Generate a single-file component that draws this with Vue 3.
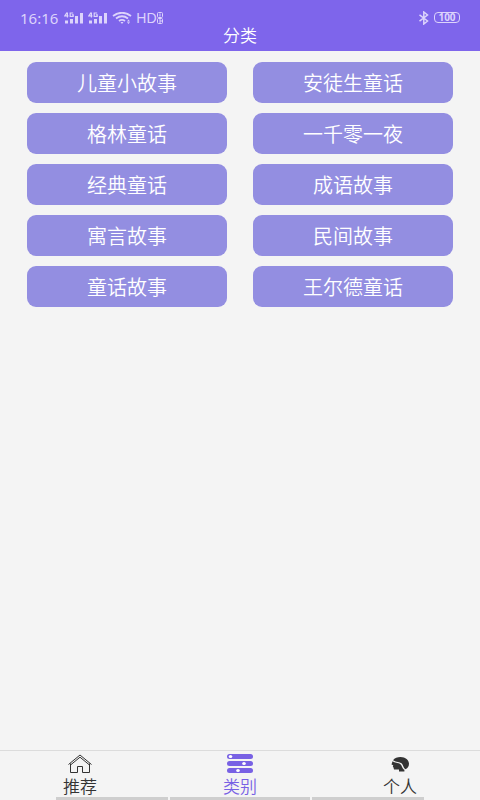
<script setup>
import { ref } from 'vue'

const categories = [
  '儿童小故事', '安徒生童话',
  '格林童话', '一千零一夜',
  '经典童话', '成语故事',
  '寓言故事', '民间故事',
  '童话故事', '王尔德童话',
]

const tabs = [
  { id: 'home', label: '推荐' },
  { id: 'category', label: '类别' },
  { id: 'profile', label: '个人' },
]
const active = ref('category')
</script>

<template>
  <div class="page">
    <header class="header">
      <div class="status">
        <div class="status-group">
          <span class="time">16:16</span>
          <svg v-for="n in 2" :key="n" class="signal" viewBox="0 0 20 12" width="20" height="12" aria-hidden="true">
            <path d="M3 0.5 L0.8 3.8 H4.400 M3.400 0.5 V5.500 M9.200 1 H6.200 V4.500 H9.200 V2.800 H7.800" fill="none" stroke="currentColor" stroke-width="1.200" />
            <path d="M1 8.500h3v3h-3z M6 7h3v4.500h-3z M11 4h3v7.500h-3z M16 1h3v10.500h-3z" fill="currentColor" />
          </svg>
          <svg class="wifi" viewBox="0 0 20 12" width="20" height="12" aria-hidden="true">
            <path d="M1 4 Q10 -2.500 19 4 M4 6.500 Q10 2 16 6.500 M7 9 Q10 6.800 13 9" fill="none" stroke="currentColor" stroke-width="1.800" />
            <path d="M8.500 10h3l-1.500 2z M15 9.500l1.500-2 1.500 2z M15 10.300h3l-1.500 1.700z" fill="currentColor" />
          </svg>
          <span class="hd">HD</span>
          <svg class="sims" viewBox="0 0 6 12" width="6" height="12" aria-hidden="true">
            <rect x="0.500" y="0.500" width="5" height="5" rx="1" fill="none" stroke="currentColor" />
            <rect x="0.500" y="6.500" width="5" height="5" rx="1" fill="none" stroke="currentColor" />
            <path d="M3 1.500v3 M2 8h2v2h-2" fill="none" stroke="currentColor" />
          </svg>
        </div>
        <div class="status-group">
          <svg viewBox="0 0 12 14" width="12" height="14" aria-hidden="true">
            <path d="M1.500 3.800 L9.500 10 L5.800 13 V1 L9.500 4 L1.500 10.200" fill="none" stroke="currentColor" stroke-width="1.500" />
          </svg>
          <span class="battery">100</span>
        </div>
      </div>
      <h1 class="title">分类</h1>
    </header>

    <main class="content">
      <button v-for="name in categories" :key="name" type="button" class="category">{{ name }}</button>
    </main>

    <nav class="tabs">
      <button
        v-for="tab in tabs"
        :key="tab.id"
        type="button"
        class="tab"
        :class="{ active: active === tab.id }"
        @click="active = tab.id"
      >
        <svg v-if="tab.id === 'home'" viewBox="0 0 26 20" width="26" height="20" aria-hidden="true">
          <path d="M1.500 10.500 L13 1 L24.500 10.500 M3.500 11 L13 3.200 L22.500 11 M3.500 9.500 V18.500 H10.500 V12.500 H15.500 V18.500 H22.500 V9.500" fill="none" stroke="currentColor" stroke-width="1" stroke-linejoin="round" />
        </svg>
        <svg v-else-if="tab.id === 'category'" viewBox="0 0 28 20" width="28" height="20" aria-hidden="true">
          <rect x="1" y="0" width="26" height="5" rx="2.500" fill="currentColor" />
          <rect x="1" y="7" width="26" height="5" rx="2.500" fill="currentColor" />
          <rect x="1" y="14" width="26" height="5" rx="2.500" fill="currentColor" />
          <ellipse cx="4.500" cy="2.500" rx="1.800" ry="1.500" fill="#fff" />
          <ellipse cx="18" cy="9.500" rx="1.800" ry="1.500" fill="#fff" />
          <ellipse cx="12" cy="16.500" rx="1.800" ry="1.500" fill="#fff" />
        </svg>
        <svg v-else viewBox="0 0 20 20" width="20" height="20" aria-hidden="true">
          <path d="M3 6.200 C4.500 3.800 7.500 3 10.500 3 C15.500 3 19 6 19 9.800 C19 12.500 17.500 14.500 15.300 15.200 C13.300 13.800 13.500 11.200 11.500 9.300 C9.500 7.600 6.500 8.300 3 6.200 Z" fill="currentColor" />
          <path d="M2.500 7.200 C5 9.300 8 8.400 10.200 10 C12.200 11.500 11.900 14.500 14.400 15.800 V17.500 H9 V15.500 H4 L3.500 13.500 L2.800 12.500 L3.300 11.300 L1.500 10.500 Z" fill="currentColor" />
        </svg>
        <span>{{ tab.label }}</span>
      </button>
    </nav>
    <div class="indicator" aria-hidden="true"><i></i><i></i><i></i></div>
  </div>
</template>

<style>
body {
  margin: 0;
  background: #f4f4f4;
}
</style>

<style scoped>
.page {
  display: flex;
  flex-direction: column;
  min-height: 100vh;
  background: #f4f4f4;
  font-family: "Noto Sans CJK SC", sans-serif;
}
.header {
  padding: 10px 20px 7px;
  background: #7e65eb;
  color: #fff;
}
.status {
  display: flex;
  justify-content: space-between;
  height: 15px;
  color: #dcd3fb;
}
.status-group {
  display: flex;
  align-items: center;
  gap: 4px;
}
.time {
  margin-right: 2px;
  font-family: "Noto Sans", sans-serif;
  font-size: 15px;
  line-height: 16px;
}
.hd {
  margin-right: -4px;
  font-family: "Liberation Sans", sans-serif;
  font-size: 14px;
  line-height: 16px;
}
.battery {
  box-sizing: border-box;
  width: 26px;
  height: 11px;
  border: 1px solid currentColor;
  border-radius: 4px;
  font-family: "Noto Sans", sans-serif;
  font-size: 10px;
  font-weight: 700;
  line-height: 9px;
  text-align: center;
}
.title {
  margin: 0;
  font-size: 17px;
  font-weight: 350;
  line-height: 19px;
  text-align: center;
}
.content {
  flex: 1;
  display: grid;
  grid-template-columns: 1fr 1fr;
  align-content: start;
  gap: 10px 26px;
  padding: 11px 27px;
}
.category {
  height: 41px;
  padding: 1px 0 0;
  border: 0;
  border-radius: 9px;
  background: #938ee1;
  color: #fff;
  font-family: inherit;
  font-size: 20px;
  font-weight: 350;
  line-height: 24px;
}
.tabs {
  display: grid;
  grid-template-columns: repeat(3, 1fr);
  border-top: 1px solid #dcdcdc;
}
.tab {
  display: flex;
  flex-direction: column;
  align-items: center;
  gap: 2px;
  padding: 3px 0 1px;
  border: 0;
  background: none;
  color: #333;
  font-family: inherit;
  font-size: 17px;
  font-weight: 350;
  line-height: 20px;
}
.tab.active {
  color: #7861e4;
}
.indicator {
  display: grid;
  grid-template-columns: 4fr 5fr 4fr;
  gap: 2px;
  height: 3px;
  padding: 0 56px;
}
.indicator i {
  background: #cecece;
}
</style>
